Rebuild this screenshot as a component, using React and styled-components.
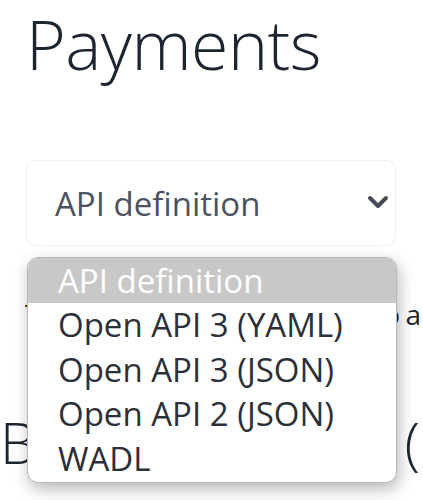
import React from "react";
import styled, { createGlobalStyle } from "styled-components";

const Global = createGlobalStyle`
  html, body { margin: 0; padding: 0; background: #fff; }
  body { font-family: "Open Sans", "Noto Sans", sans-serif; overflow: hidden; }
`;

const Page = styled.div`
  position: relative;
  width: 423px;
  height: 500px;
  overflow: hidden;
`;

const Content = styled.div`
  padding: 3px 0 0 26px;
`;

const Title = styled.h1`
  margin: 0;
  font-weight: 300;
  font-size: 68px;
  line-height: 82px;
  color: #1d2531;
  letter-spacing: -0.5px;
`;

const SelectBox = styled.div`
  margin-top: 75px;
  width: 370px;
  height: 86px;
  box-sizing: border-box;
  border: 1px solid #eceef0;
  border-radius: 9px;
  display: flex;
  align-items: center;
  justify-content: space-between;
  padding: 0 6px 0 28px;
  font-size: 33px;
  color: #4b5360;
`;

const Chevron = styled.svg`
  width: 22px;
  height: 14px;
  margin-top: -2px;
`;

const Para = styled.p`
  margin: 48px 0 0 -1px;
  font-size: 28px;
  line-height: 40px;
  color: #212529;
  white-space: nowrap;
  display: flex;
  justify-content: space-between;
  width: 396px;
  word-spacing: -2px;
`;

const SubHeading = styled.h2`
  margin: 76px 0 0 -26px;
  font-weight: 300;
  font-size: 57px;
  line-height: 64px;
  color: #1d2531;
  display: flex;
  justify-content: space-between;
  width: 420px;
`;

const Menu = styled.ul`
  position: absolute;
  left: 27px;
  top: 257px;
  width: 370px;
  box-sizing: border-box;
  margin: 0;
  padding: 0 0 1px;
  list-style: none;
  background: #fff;
  border: 1px solid #b8b8b8;
  border-radius: 11px;
  overflow: hidden;
  box-shadow: 2px 6px 16px rgba(0, 0, 0, 0.28);
`;

const Item = styled.li`
  height: 44.5px;
  display: flex;
  align-items: center;
  padding-left: 30px;
  font-size: 33px;
  color: ${(p) => (p.$active ? "#ffffff" : "#2c3038")};
  background: ${(p) => (p.$active ? "#c8c8c8" : "transparent")};
`;

const options = [
  "API definition",
  "Open API 3 (YAML)",
  "Open API 3 (JSON)",
  "Open API 2 (JSON)",
  "WADL",
];

export default function App() {
  return (
    <Page>
      <Global />
      <Content>
        <Title>Payments</Title>
        <SelectBox>
          <span>API definition</span>
          <Chevron viewBox="0 0 22 14">
            <path d="M3 3 L11 11 L19 3" fill="none" stroke="#444b54" strokeWidth="4" strokeLinecap="round" strokeLinejoin="round" />
          </Chevron>
        </SelectBox>
        <Para>
          <span>To use this API</span>
          <span>o a</span>
        </Para>
        <SubHeading>
          <span>Base</span>
          <span>(</span>
        </SubHeading>
      </Content>
      <Menu>
        {options.map((o, i) => (
          <Item key={o} $active={i === 0}>
            {o}
          </Item>
        ))}
      </Menu>
    </Page>
  );
}
